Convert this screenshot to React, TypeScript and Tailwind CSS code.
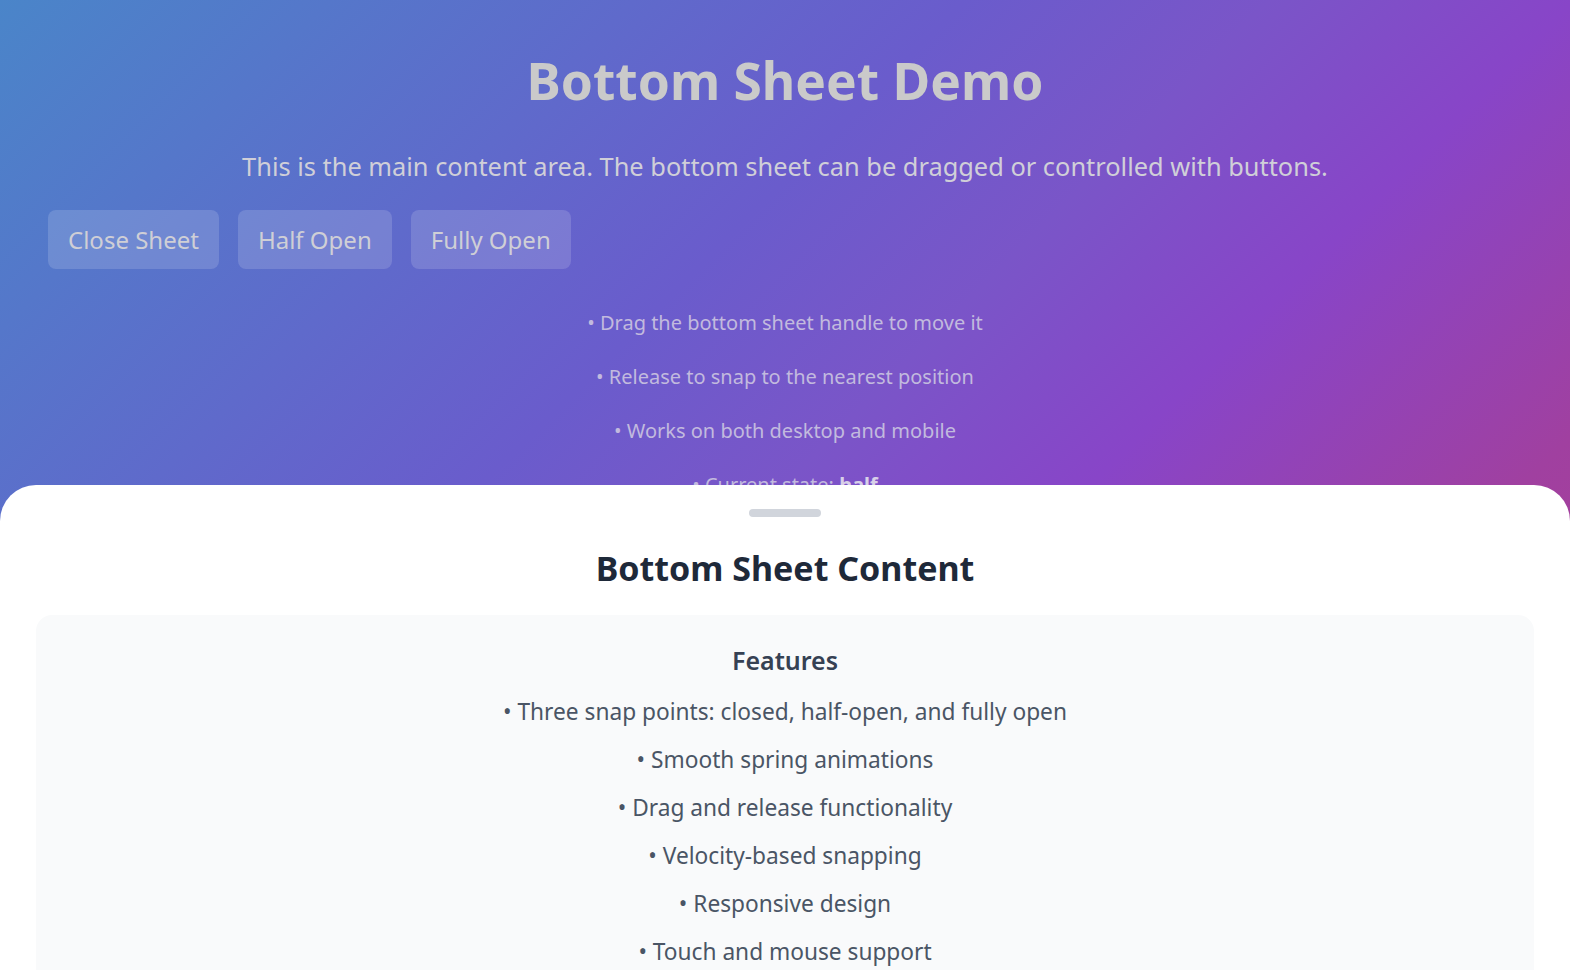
import { useState } from 'react'

type SheetState = 'closed' | 'half' | 'full'

const hints = [
  'Drag the bottom sheet handle to move it',
  'Release to snap to the nearest position',
  'Works on both desktop and mobile',
]

const features = [
  'Three snap points: closed, half-open, and fully open',
  'Smooth spring animations',
  'Drag and release functionality',
  'Velocity-based snapping',
  'Responsive design',
  'Touch and mouse support',
]

function DemoButton({ label, onClick }: { label: string; onClick: () => void }) {
  return (
    <button
      onClick={onClick}
      className="h-[59px] px-5 rounded-lg bg-white/15 text-[24px] text-[#cfcfd6] leading-none"
    >
      {label}
    </button>
  )
}

export default function App() {
  const [state, setState] = useState<SheetState>('half')

  return (
    <div className="relative h-screen overflow-hidden font-['Noto_Sans',sans-serif] bg-[linear-gradient(135deg,#4a85c9_0%,#6a5ccc_38%,#7a55c8_50%,#8845c8_62%,#a040a0_79%,#b03c90_100%)]">
      <div className="px-12 pt-[42px]">
        <h1 className="text-center text-[51.5px] font-bold leading-[76px] text-[#cacaca]">
          Bottom Sheet Demo
        </h1>
        <p className="mt-[30px] text-center text-[25.4px] leading-[36px] text-[#d0cfd8]">
          This is the main content area. The bottom sheet can be dragged or controlled with buttons.
        </p>
        <div className="mt-[26px] flex gap-[19px]">
          <DemoButton label="Close Sheet" onClick={() => setState('closed')} />
          <DemoButton label="Half Open" onClick={() => setState('half')} />
          <DemoButton label="Fully Open" onClick={() => setState('full')} />
        </div>
        <div className="mt-[39px] flex flex-col gap-[24px] text-center text-[20px] leading-[30px] text-[#c2bade]">
          {hints.map((h) => (
            <p key={h}>• {h}</p>
          ))}
          <p>
            • Current state: <span className="font-bold text-[#d8d0e8]">{state}</span>
          </p>
        </div>
      </div>

      <div className="absolute inset-x-0 top-[485px] bottom-0 rounded-t-[36px] bg-white">
        <div className="flex justify-center pt-[24px]">
          <div className="h-2 w-[72px] rounded-full bg-gray-300" />
        </div>
        <h2 className="mt-[29px] text-center text-[34px] font-bold leading-[44px] text-gray-800">
          Bottom Sheet Content
        </h2>
        <div className="mx-9 mt-[25px] rounded-2xl bg-gray-50 pt-[27px] pb-10">
          <h3 className="text-center text-[25px] font-semibold leading-9 text-gray-700">Features</h3>
          <ul className="mt-[16px] flex flex-col gap-[12px] text-center text-[22.7px] leading-9 text-gray-600">
            {features.map((f) => (
              <li key={f}>• {f}</li>
            ))}
          </ul>
        </div>
      </div>
    </div>
  )
}
